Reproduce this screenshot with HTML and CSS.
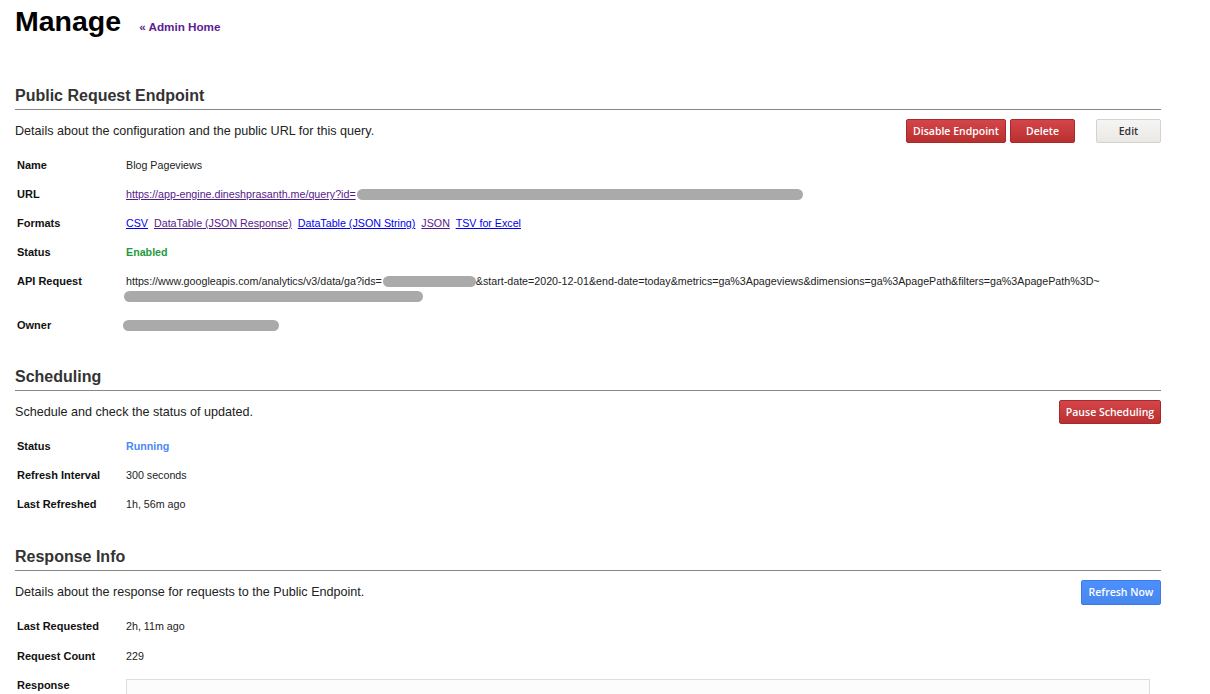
FILE: index.html
```html
<!DOCTYPE html>
<html>
<head>
<meta charset="utf-8">
<title>Manage</title>
<link rel="stylesheet" href="styles.css">
</head>
<body>
<div class="page">
  <div class="title-row">
    <h1 class="title">Manage</h1>
    <a class="back-link" href="#">« Admin Home</a>
  </div>

  <section class="section first">
    <h2 class="section-title">Public Request Endpoint</h2>
    <div class="desc-row">
      <p class="desc">Details about the configuration and the public URL for this query.</p>
      <div class="actions">
        <button class="btn btn-red btn-disable">Disable Endpoint</button>
        <button class="btn btn-red btn-delete">Delete</button>
        <button class="btn btn-light btn-edit">Edit</button>
      </div>
    </div>
    <table class="info">
      <tr><td class="label">Name</td><td class="value">Blog Pageviews</td></tr>
      <tr><td class="label">URL</td><td class="value"><a class="visited" href="#">https://app-engine.dineshprasanth.me/query?id=</a><span class="redact redact-url"></span></td></tr>
      <tr><td class="label">Formats</td><td class="value formats"><a href="#">CSV</a> <a class="visited" href="#">DataTable (JSON Response)</a> <a href="#">DataTable (JSON String)</a> <a class="visited" href="#">JSON</a> <a href="#">TSV for Excel</a></td></tr>
      <tr><td class="label">Status</td><td class="value status-on">Enabled</td></tr>
      <tr><td class="label">API Request</td><td class="value api">https://www.googleapis.com/analytics/v3/data/ga?ids=<span class="redact redact-ids"></span>&amp;start-date=2020-12-01&amp;end-date=today&amp;metrics=ga%3Apageviews&amp;dimensions=ga%3ApagePath&amp;filters=ga%3ApagePath%3D~<br><span class="redact redact-api2"></span></td></tr>
      <tr><td class="label">Owner</td><td class="value"><span class="redact redact-owner"></span></td></tr>
    </table>
  </section>

  <section class="section sched">
    <h2 class="section-title">Scheduling</h2>
    <div class="desc-row">
      <p class="desc">Schedule and check the status of updated.</p>
      <div class="actions">
        <button class="btn btn-red btn-pause">Pause Scheduling</button>
      </div>
    </div>
    <table class="info">
      <tr><td class="label">Status</td><td class="value status-run">Running</td></tr>
      <tr><td class="label">Refresh Interval</td><td class="value">300 seconds</td></tr>
      <tr><td class="label">Last Refreshed</td><td class="value">1h, 56m ago</td></tr>
    </table>
  </section>

  <section class="section resp">
    <h2 class="section-title">Response Info</h2>
    <div class="desc-row">
      <p class="desc">Details about the response for requests to the Public Endpoint.</p>
      <div class="actions">
        <button class="btn btn-blue btn-refresh">Refresh Now</button>
      </div>
    </div>
    <table class="info info-resp">
      <tr><td class="label">Last Requested</td><td class="value">2h, 11m ago</td></tr>
      <tr><td class="label">Request Count</td><td class="value">229</td></tr>
      <tr><td class="label">Response</td><td class="value"><div class="response-box"></div></td></tr>
    </table>
  </section>
</div>
</body>
</html>
```

FILE: styles.css
```css
html, body {
  margin: 0;
  padding: 0;
  background: #fff;
}
body {
  font-family: "Liberation Sans", Arial, sans-serif;
  color: #222;
}
.page {
  width: 1146px;
  margin: 0 15px;
}
.title-row {
  display: flex;
  align-items: baseline;
  padding-top: 5px;
}
.title {
  margin: 0;
  font-size: 28.5px;
  font-weight: bold;
  color: #000;
  line-height: 33px;
}
.back-link {
  margin-left: 18px;
  font-size: 11.7px;
  font-weight: bold;
  color: #5b1d96;
  text-decoration: none;
}
.section.first {
  margin-top: 47px;
}
.section.sched {
  margin-top: 26px;
}
.section.resp {
  margin-top: 27px;
}
.section-title {
  margin: 0;
  font-size: 16px;
  line-height: 21px;
  font-weight: bold;
  color: #333;
  padding-bottom: 3px;
  border-bottom: 1px solid #888;
}
.desc-row {
  display: flex;
  align-items: center;
  justify-content: space-between;
  margin-top: 9px;
  height: 24px;
}
.desc {
  margin: 0;
  font-size: 12.6px;
  line-height: 16px;
  color: #222;
}
.actions {
  display: flex;
  align-items: center;
}
.btn {
  box-sizing: border-box;
  height: 24px;
  padding: 0;
  border-radius: 2px;
  font-family: "Open Sans", "DejaVu Sans", sans-serif;
  font-size: 10.5px;
  font-weight: 600;
  cursor: pointer;
}
.btn-red {
  color: #fff;
  background: linear-gradient(#d4454a, #b9302f);
  border: 1px solid #a8292b;
}
.btn-blue {
  color: #fff;
  background: linear-gradient(#4d90fe, #4787ed);
  border: 1px solid #3b7ae8;
  height: 25px;
}
.btn-light {
  color: #333;
  background: linear-gradient(#f5f5f5, #eae8e4);
  border: 1px solid #d4d2ce;
}
.btn-disable { width: 100px; }
.btn-delete { width: 65px; margin-left: 4px; }
.btn-edit { width: 65px; margin-left: 21px; }
.btn-pause { width: 102px; }
.btn-refresh { width: 80px; }

.info {
  border-collapse: collapse;
  margin-top: 8px;
  font-size: 10.7px;
}
.info td {
  padding: 7px 2px;
  line-height: 15px;
  vertical-align: top;
}
.info .label {
  width: 105px;
  font-size: 11px;
  font-weight: bold;
  color: #111;
}
.info .value {
  color: #222;
}
.info a {
  color: #0000ee;
}
.info a.visited {
  color: #551a8b;
}
.formats a {
  margin-right: 3px;
}
.status-on {
  color: #1e9b3c !important;
  font-weight: bold;
}
.status-run {
  color: #4a89f3 !important;
  font-weight: bold;
}
.redact {
  display: inline-block;
  background: #aaa;
  height: 11px;
  border-radius: 6px;
  vertical-align: -2px;
}
.redact-url {
  width: 446px;
  margin-left: 1px;
}
.redact-ids {
  width: 93px;
  margin-left: 1px;
}
.redact-api2 {
  width: 299px;
  margin-left: -2px;
}
.redact-owner {
  width: 156px;
  margin-left: -3px;
}
.info-resp tr:nth-child(2) td {
  padding-top: 8px;
}
.response-box {
  box-sizing: border-box;
  width: 1024px;
  height: 40px;
  margin-top: 1px;
  border: 1px solid #ddd;
  background: #fcfcfc;
}
```
